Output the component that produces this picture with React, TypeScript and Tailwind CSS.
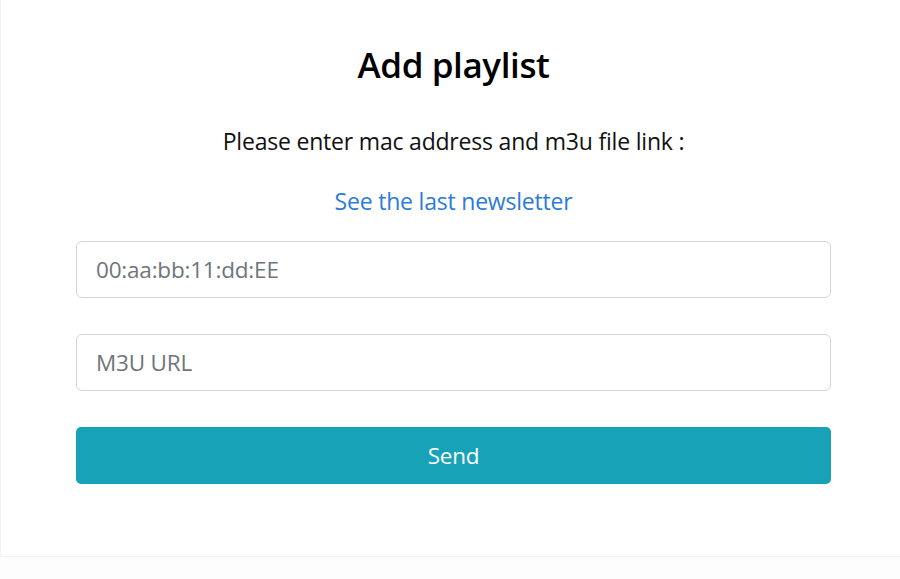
import React from "react";

export default function App() {
  return (
    <div
      className="w-[900px] h-[579px] bg-white overflow-hidden"
      style={{ fontFamily: '"Open Sans", "Noto Sans", sans-serif' }}
    >
      <div className="h-[557px] border-b border-l border-[#f1f1f1] bg-white">
        <div className="ml-[75px] w-[755px] pt-[43px] flex flex-col items-center">
          <h1 className="text-[35px] leading-[44px] font-semibold text-black tracking-[-0.4px]">
            Add playlist
          </h1>
          <p className="mt-[39px] text-[23px] leading-[30px] text-[#111] tracking-[-0.2px]">
            Please enter mac address and m3u file link :
          </p>
          <a
            href="#"
            className="mt-[30px] text-[23px] leading-[30px] text-[#2d7bd8] tracking-[-0.2px]"
          >
            See the last newsletter
          </a>
          <form className="w-full mt-[25px] flex flex-col gap-[36px]">
            <input
              type="text"
              placeholder="00:aa:bb:11:dd:EE"
              className="w-full h-[57px] rounded-[6px] border border-[#d3d6d9] px-[19px] text-[22.5px] text-[#333] placeholder:text-[#6f757b] outline-none tracking-[-0.2px]"
            />
            <input
              type="text"
              placeholder="M3U URL"
              className="w-full h-[57px] rounded-[6px] border border-[#d3d6d9] px-[19px] text-[22.5px] text-[#333] placeholder:text-[#6f757b] outline-none tracking-[-0.2px]"
            />
            <button
              type="button"
              className="w-full h-[57px] rounded-[5px] bg-[#17a2b8] text-white text-[22.5px] tracking-[-0.3px]"
            >
              Send
            </button>
          </form>
        </div>
      </div>
      <div className="h-[22px] bg-[#fdfdfd]" />
    </div>
  );
}
